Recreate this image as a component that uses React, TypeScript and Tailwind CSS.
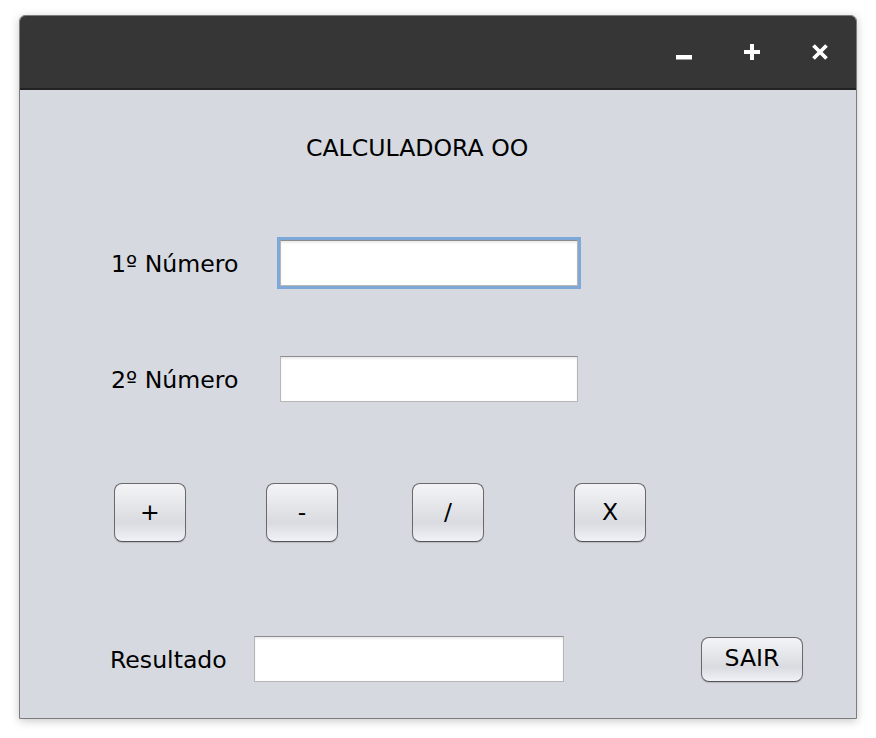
const font = { fontFamily: '"DejaVu Sans", "Liberation Sans", sans-serif' };

const inputCls = 'h-[46px] bg-white border border-[#b6b6b6] border-t-[#8c8c8c]';

const btnCls =
  'flex items-center justify-center rounded-[8px] border border-[#6a6a6c] border-b-[#555557] bg-[linear-gradient(to_bottom,#f4f4f6,#d9dbe0_68%,#f0f2f8)] shadow-[0_1px_1px_rgba(0,0,0,0.15)] text-[23.6px] text-black';

const TitleButtons = () => (
  <div className="flex items-center gap-[52px] pr-[28px]">
    <svg width="16" height="16" viewBox="0 0 16 16">
      <rect x="0" y="11" width="16" height="4.5" fill="#fff" />
    </svg>
    <svg width="16" height="16" viewBox="0 0 16 16">
      <rect x="6" y="0" width="4" height="16" fill="#fff" />
      <rect x="0" y="6" width="16" height="4" fill="#fff" />
    </svg>
    <svg width="16" height="16" viewBox="0 0 16 16">
      <path d="M1.5 1.5 L14.5 14.5 M14.5 1.5 L1.5 14.5" stroke="#fff" strokeWidth="3.8" />
    </svg>
  </div>
);

export default function App() {
  return (
    <div className="min-h-screen bg-white pt-[15px] pl-[19px]" style={font}>
      <div className="w-[838px] h-[704px] flex flex-col border border-[#7c7c7c] rounded-t-[6px] overflow-hidden shadow-[0_2px_10px_rgba(0,0,0,0.22)]">
        {/* title bar */}
        <div className="h-[74px] shrink-0 bg-[#363636] border-b-2 border-[#222] flex items-center justify-end">
          <TitleButtons />
        </div>

        {/* body */}
        <div className="flex-1 bg-[#d6d9e0] flex flex-col text-[23.6px] text-black">
          <div className="pt-[44px] pl-[286px] leading-[28px]">CALCULADORA OO</div>

          <div className="mt-[78px] flex items-center pl-[91px]">
            <span className="w-[169px] shrink-0 mt-[3px]">1º Número</span>
            <div className={`w-[298px] ${inputCls} shadow-[0_0_0_3px_#7da8d8,inset_0_2px_2px_rgba(0,0,0,0.08)]`} />
          </div>

          <div className="mt-[70px] flex items-center pl-[91px]">
            <span className="w-[169px] shrink-0 mt-[3px]">2º Número</span>
            <div className={`w-[298px] ${inputCls} shadow-[inset_0_2px_2px_rgba(0,0,0,0.08)]`} />
          </div>

          <div className="mt-[81px] flex pl-[94px]">
            <button className={`w-[72px] h-[59px] ${btnCls}`}>+</button>
            <button className={`ml-[80px] w-[72px] h-[59px] ${btnCls}`}>-</button>
            <button className={`ml-[74px] w-[72px] h-[59px] ${btnCls}`}>/</button>
            <button className={`ml-[90px] w-[72px] h-[59px] ${btnCls}`}>X</button>
          </div>

          <div className="mt-[94px] flex items-center pl-[90px]">
            <span className="w-[144px] shrink-0 mt-[3px]">Resultado</span>
            <div className={`w-[310px] ${inputCls} shadow-[inset_0_2px_2px_rgba(0,0,0,0.08)]`} />
            <button className={`ml-[137px] w-[102px] h-[45px] ${btnCls}`}>SAIR</button>
          </div>
        </div>
      </div>
    </div>
  );
}
